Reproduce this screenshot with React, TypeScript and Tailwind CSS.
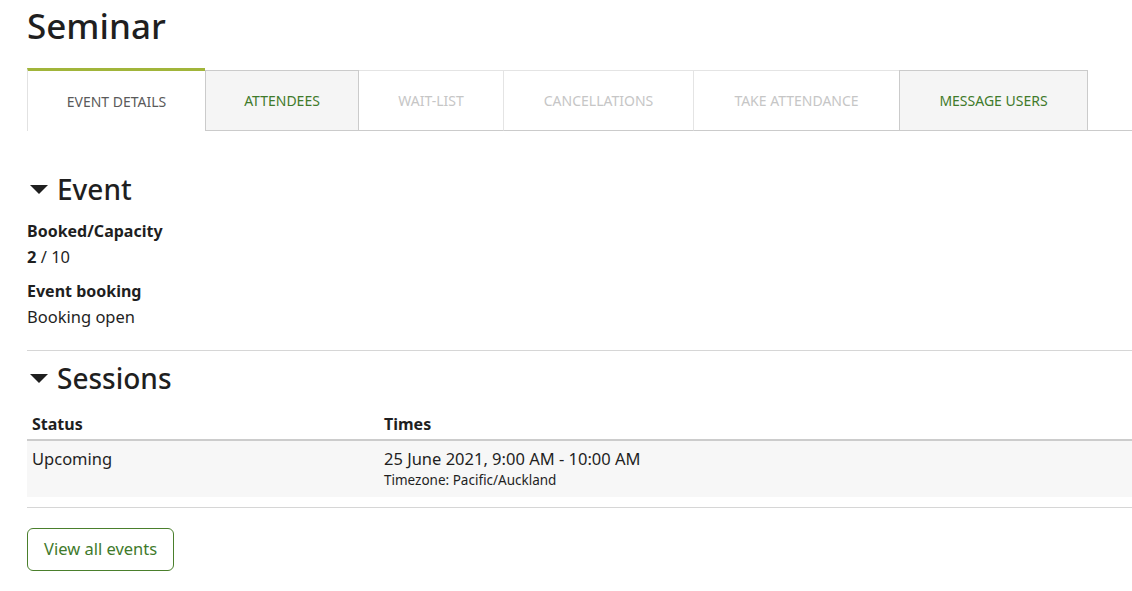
import { ReactNode } from 'react';

type Tab = {
  label: string;
  width: string;
  kind: 'active' | 'link' | 'disabled';
};

const tabs: Tab[] = [
  { label: 'Event details', width: 'w-[178px]', kind: 'active' },
  { label: 'Attendees', width: 'w-[154px]', kind: 'link' },
  { label: 'Wait-list', width: 'w-[145px]', kind: 'disabled' },
  { label: 'Cancellations', width: 'w-[190px]', kind: 'disabled' },
  { label: 'Take attendance', width: 'w-[206px]', kind: 'disabled' },
  { label: 'Message users', width: 'w-[189px] -ml-px', kind: 'link' },
];

function TabItem({ tab }: { tab: Tab }) {
  if (tab.kind === 'active') {
    return (
      <div
        className={`${tab.width} h-[63px] flex items-center justify-center border-t-[3px] border-l border-t-[#a1b53a] border-l-[#e2e2e2] bg-white text-[#5a5a5a] uppercase text-[14px]`}
      >
        {tab.label}
      </div>
    );
  }
  if (tab.kind === 'link') {
    return (
      <div
        className={`${tab.width} h-[61px] flex items-center justify-center border border-[#cbcbcb] bg-[#f5f5f5] text-[#3f7a2b] uppercase text-[14px]`}
      >
        {tab.label}
      </div>
    );
  }
  return (
    <div
      className={`${tab.width} h-[61px] flex items-center justify-center border-t border-r border-t-[#e4e4e4] border-r-[#e4e4e4] border-b border-b-[#cbcbcb] bg-white text-[#c6c6c6] uppercase text-[14px]`}
    >
      {tab.label}
    </div>
  );
}

function SectionHeading({ children }: { children: ReactNode }) {
  return (
    <div className="flex items-center h-[36px]">
      <svg width="18" height="9" viewBox="0 0 18 9" className="ml-[3px] mr-[9px]">
        <polygon points="0,0 18,0 9,9" fill="#1f1f1f" />
      </svg>
      <h2 className="text-[28px] leading-[36px] font-medium text-[#1f1f1f]">{children}</h2>
    </div>
  );
}

export default function App() {
  return (
    <div
      className="bg-white min-h-[591px] pl-[27px] text-[#1f1f1f] text-[16.5px]"
      style={{ fontFamily: '"Noto Sans", "Open Sans", sans-serif' }}
    >
      <h1 className="pt-[4px] text-[35px] leading-[43px] font-medium text-[#1f1f1f]">Seminar</h1>

      <div className="mt-[21px] flex items-end">
        {tabs.map((tab) => (
          <TabItem key={tab.label} tab={tab} />
        ))}
        <div className="flex-1 h-px bg-[#cbcbcb]" />
      </div>

      <div className="mt-[40px]">
        <SectionHeading>Event</SectionHeading>
      </div>

      <div className="mt-[12px]">
        <div className="font-bold leading-[25px] text-[16px]">Booked/Capacity</div>
        <div className="leading-[25px]">
          <span className="font-bold">2</span> / 10
        </div>
        <div className="mt-[10px] font-bold leading-[25px] text-[16px]">Event booking</div>
        <div className="leading-[25px]">Booking open</div>
      </div>

      <div className="mt-[21px] h-px bg-[#d6d6d6]" />

      <div className="mt-[9px]">
        <SectionHeading>Sessions</SectionHeading>
      </div>

      <div className="mt-[12px]">
        <div className="flex h-[33px] items-center border-b-2 border-[#cccccc] font-bold text-[16px]">
          <div className="w-[352px] px-[5px]">Status</div>
          <div className="px-[5px]">Times</div>
        </div>
        <div className="flex h-[56px] bg-[#f7f7f7] pt-[7px]">
          <div className="w-[352px] px-[5px] leading-[22px]">Upcoming</div>
          <div className="px-[5px]">
            <div className="leading-[22px]">25 June 2021, 9:00 AM - 10:00 AM</div>
            <div className="text-[13.5px] leading-[21px]">Timezone: Pacific/Auckland</div>
          </div>
        </div>
      </div>

      <div className="mt-[10px] h-px bg-[#d6d6d6]" />

      <button className="mt-[20px] h-[43px] px-[16px] rounded-[6px] border border-[#4a7f2c] text-[#3f7a2b] text-[16.5px] bg-white">
        View all events
      </button>
    </div>
  );
}
